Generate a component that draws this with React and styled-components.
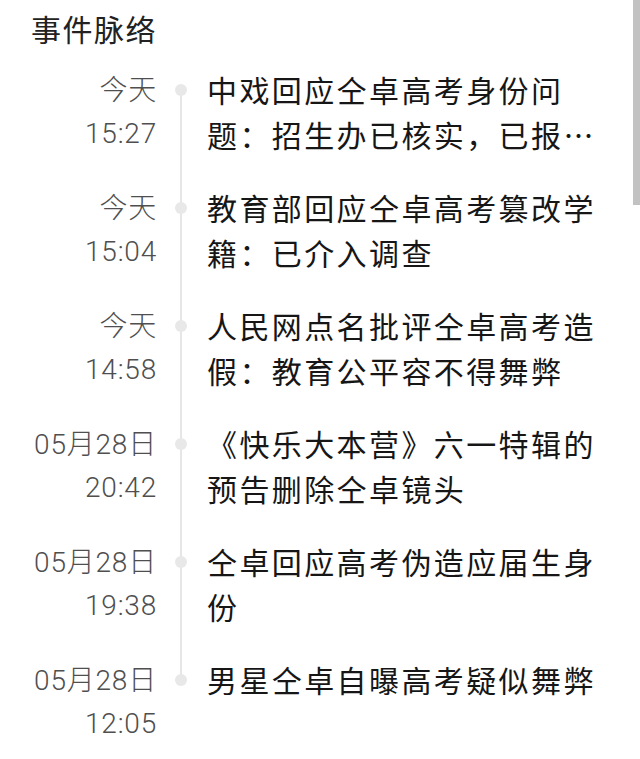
import React from 'react'
import styled, { createGlobalStyle } from 'styled-components'

const GlobalStyle = createGlobalStyle`
  html, body {
    margin: 0;
    padding: 0;
    background: #ffffff;
  }
  body {
    font-family: "Noto Sans CJK SC", "Noto Sans", sans-serif;
    overflow: hidden;
  }
`

const events = [
  { day: '今天', time: '15:27', title: '中戏回应仝卓高考身份问题：招生办已核实，已报教育部等待调查结果' },
  { day: '今天', time: '15:04', title: '教育部回应仝卓高考篡改学籍：已介入调查' },
  { day: '今天', time: '14:58', title: '人民网点名批评仝卓高考造假：教育公平容不得舞弊' },
  { day: '05月28日', time: '20:42', title: '《快乐大本营》六一特辑的预告删除仝卓镜头' },
  { day: '05月28日', time: '19:38', title: '仝卓回应高考伪造应届生身份' },
  { day: '05月28日', time: '12:05', title: '男星仝卓自曝高考疑似舞弊' },
]

const Page = styled.div`
  position: relative;
  width: 640px;
  height: 759px;
  overflow: hidden;
`

const Heading = styled.h2`
  margin: 0;
  padding: 6px 0 0 31px;
  font-size: 30px;
  line-height: 44px;
  font-weight: 400;
  letter-spacing: 1.5px;
  color: #222222;
`

const Timeline = styled.ul`
  list-style: none;
  margin: 17px 0 0;
  padding: 0;
  display: flex;
  flex-direction: column;
  gap: 28px;
`

const Item = styled.li`
  display: grid;
  grid-template-columns: 157px 50px 400px;
  align-items: start;
`

const When = styled.div`
  box-sizing: border-box;
  height: 90px;
  padding-top: 2px;
  text-align: right;
  font-family: Roboto, "Noto Sans CJK SC", sans-serif;
  font-weight: 300;
  font-size: 28px;
  color: #4f4f4f;
  letter-spacing: 0.8px;
`

const WhenLine = styled.div`
  height: 43px;
  line-height: 43px;
`

const Rail = styled.div`
  position: relative;
  align-self: stretch;

  &::before {
    content: '';
    position: absolute;
    left: 23px;
    width: 2px;
    background: #e6e6e6;
    top: ${p => (p.$first ? '22px' : '-28px')};
    bottom: ${p => (p.$last ? 'auto' : '0')};
    height: ${p => (p.$last ? '50px' : 'auto')};
    display: ${p => (p.$first && p.$last ? 'none' : 'block')};
  }

  &::after {
    content: '';
    position: absolute;
    left: 18px;
    top: 17px;
    width: 12px;
    height: 12px;
    border-radius: 50%;
    background: #e8e8e8;
  }
`

const Title = styled.div`
  font-size: 30px;
  line-height: 45px;
  letter-spacing: 2.4px;
  color: #161616;
  display: -webkit-box;
  -webkit-line-clamp: 2;
  -webkit-box-orient: vertical;
  overflow: hidden;
`

const Scrollbar = styled.div`
  position: absolute;
  top: 0;
  right: 0;
  width: 7px;
  height: 205px;
  background: #c2c2c2;
`

export default function App() {
  return (
    <Page>
      <GlobalStyle />
      <Heading>事件脉络</Heading>
      <Timeline>
        {events.map((e, i) => (
          <Item key={i}>
            <When>
              <WhenLine>{e.day}</WhenLine>
              <WhenLine>{e.time}</WhenLine>
            </When>
            <Rail $first={i === 0} $last={i === events.length - 1} />
            <Title>{e.title}</Title>
          </Item>
        ))}
      </Timeline>
      <Scrollbar />
    </Page>
  )
}
